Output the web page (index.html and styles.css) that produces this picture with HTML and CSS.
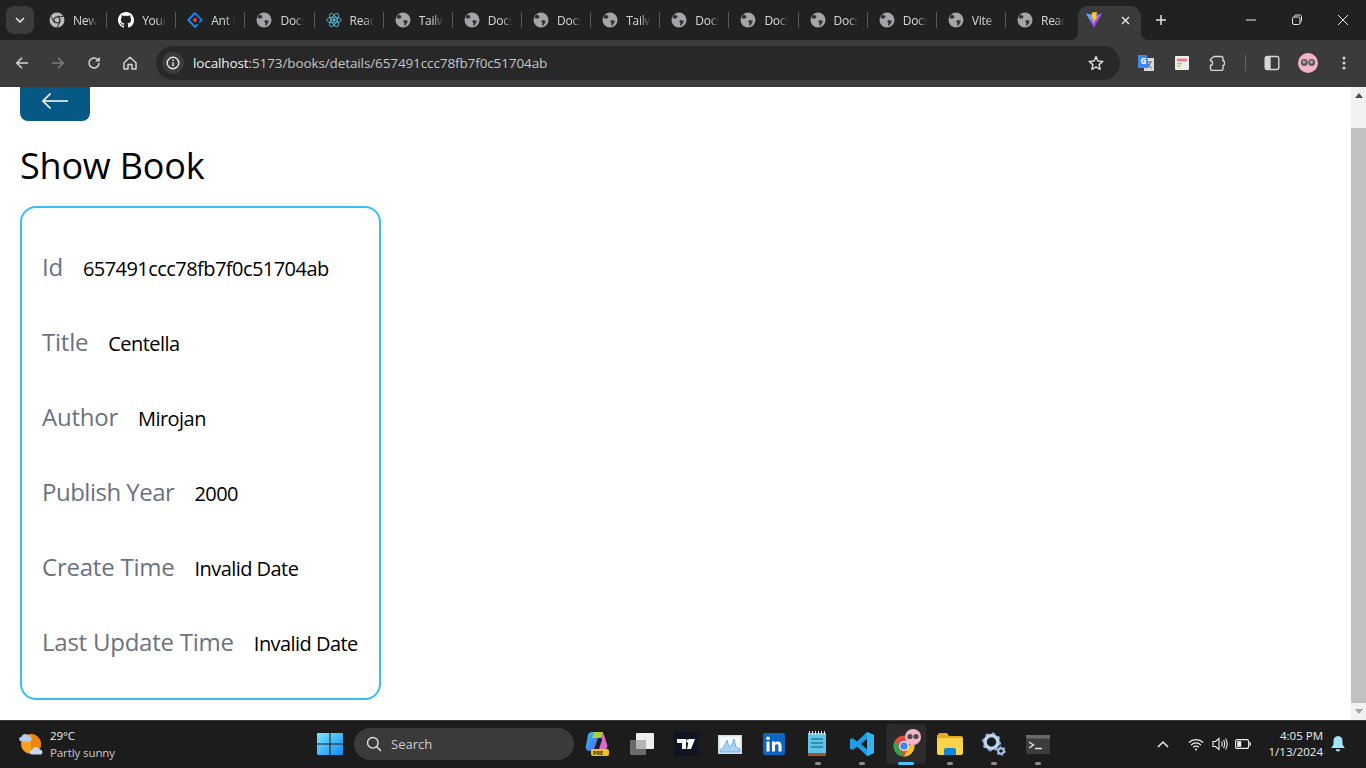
FILE: index.html
```html
<!DOCTYPE html>
<html lang="en">
<head>
<meta charset="utf-8">
<title>Show Book</title>
<link rel="stylesheet" href="styles.css">
</head>
<body>
<svg class="defs" width="0" height="0">
  <symbol id="globe" viewBox="0 0 16 16">
    <circle cx="8" cy="8" r="7.500" fill="#a3a5a8"/>
    <path d="M3.600 2.600 6.400 4 6 6 3.800 6.800 1.400 5.800C1.800 4.500 2.600 3.400 3.600 2.600ZM9.400 8 12.800 8.800 12.200 10.800 10.200 13.800 9.200 13.400 9.400 11 8.200 9.400Z" fill="#2f3133"/>
  </symbol>
</svg>
<div class="screen">
  <header class="tabstrip">
    <button class="tabsearch"><svg width="10" height="6" viewBox="0 0 10 6"><path d="M1 1l4 4 4-4" fill="none" stroke="#e3e3e3" stroke-width="1.600"/></svg></button>
    <div class="tabs">
      <div class="tab"><svg class="fav" viewBox="0 0 16 16"><circle cx="8" cy="8" r="7.500" fill="#b9bbbd"/><circle cx="8" cy="8" r="3.600" fill="#2a2c2e"/><circle cx="8" cy="8" r="2.400" fill="#b9bbbd"/><path d="M8 4.400h6.400M5 10 1.800 4.400M11 10l-3 5.400" stroke="#2a2c2e" stroke-width="1"/></svg><span class="tab-label">New Tab</span></div>
      <div class="tab"><svg class="fav" viewBox="0 0 16 16"><path fill="#fff" d="M8 0C3.580 0 0 3.580 0 8c0 3.540 2.290 6.530 5.470 7.590.4.070.55-.17.55-.38 0-.19-.01-.82-.01-1.490-2.010.37-2.530-.49-2.690-.94-.09-.23-.48-.94-.82-1.130-.28-.15-.68-.52-.01-.53.63-.01 1.080.58 1.230.82.72 1.210 1.870.87 2.330.66.070-.52.28-.87.51-1.070-1.780-.2-3.640-.89-3.640-3.950 0-.87.31-1.590.82-2.150-.08-.2-.36-1.020.08-2.120 0 0 .67-.21 2.200.82.64-.18 1.320-.27 2-.27s1.360.09 2 .27c1.530-1.040 2.200-.82 2.200-.82.44 1.100.16 1.920.08 2.120.51.56.82 1.270.82 2.150 0 3.070-1.870 3.750-3.650 3.950.29.25.54.73.54 1.480 0 1.070-.01 1.930-.01 2.200 0 .21.15.46.55.38A8.010 8.010 0 0 0 16 8c0-4.420-3.580-8-8-8Z"/></svg><span class="tab-label">Your Repo</span></div>
      <div class="tab"><svg class="fav fav-ant" viewBox="0 0 16 16" fill="none" stroke-width="1.900"><path d="M8 1 1.300 8 8 15 10.600 12.300" stroke="#1a8cf5"/><path d="M8 1 14.700 8 12.200 10.600M8 1 5.400 3.700" stroke="#1578dc"/><circle cx="8" cy="8" r="2" fill="#ef3a4e" stroke="none"/></svg><span class="tab-label">Ant Design</span></div>
      <div class="tab"><svg class="fav" viewBox="0 0 16 16"><use href="#globe"/></svg><span class="tab-label">Docs</span></div>
      <div class="tab"><svg class="fav" viewBox="0 0 16 16" fill="none" stroke="#5ab4cf" stroke-width=".9"><ellipse cx="8" cy="8" rx="7.300" ry="2.900"/><ellipse cx="8" cy="8" rx="7.300" ry="2.900" transform="rotate(60 8 8)"/><ellipse cx="8" cy="8" rx="7.300" ry="2.900" transform="rotate(120 8 8)"/><circle cx="8" cy="8" r="1.300" fill="#5ab4cf"/></svg><span class="tab-label">React</span></div>
      <div class="tab"><svg class="fav" viewBox="0 0 16 16"><use href="#globe"/></svg><span class="tab-label">Tailwind</span></div>
      <div class="tab"><svg class="fav" viewBox="0 0 16 16"><use href="#globe"/></svg><span class="tab-label">Docs</span></div>
      <div class="tab"><svg class="fav" viewBox="0 0 16 16"><use href="#globe"/></svg><span class="tab-label">Docs</span></div>
      <div class="tab"><svg class="fav" viewBox="0 0 16 16"><use href="#globe"/></svg><span class="tab-label">Tailwind</span></div>
      <div class="tab"><svg class="fav" viewBox="0 0 16 16"><use href="#globe"/></svg><span class="tab-label">Docs</span></div>
      <div class="tab"><svg class="fav" viewBox="0 0 16 16"><use href="#globe"/></svg><span class="tab-label">Docs</span></div>
      <div class="tab"><svg class="fav" viewBox="0 0 16 16"><use href="#globe"/></svg><span class="tab-label">Docs</span></div>
      <div class="tab"><svg class="fav" viewBox="0 0 16 16"><use href="#globe"/></svg><span class="tab-label">Docs</span></div>
      <div class="tab"><svg class="fav" viewBox="0 0 16 16"><use href="#globe"/></svg><span class="tab-label">Vite</span></div>
      <div class="tab tab-last"><svg class="fav" viewBox="0 0 16 16"><use href="#globe"/></svg><span class="tab-label">React</span></div>
      <div class="tab-active">
        <svg class="fav" viewBox="0 0 16 16"><defs><linearGradient id="vite" x1="0" y1="0" x2="1" y2="1"><stop offset="0" stop-color="#41d1ff"/><stop offset=".6" stop-color="#a04bf5"/><stop offset="1" stop-color="#8a3ff0"/></linearGradient></defs><path d="M0 1.500 8 3 16 1.500 8 15.500Z" fill="url(#vite)"/><path d="M6 .6 11.200 0 9.800 4.600 11.800 4.200 6.800 11.800 7.600 6.400 5.400 6.700Z" fill="#fdc530"/></svg>
        <svg class="tab-close" width="9" height="9" viewBox="0 0 9 9"><path d="M1 1l7 7M8 1 1 8" stroke="#e8e8e8" stroke-width="1.400"/></svg>
      </div>
      <svg class="newtab" width="12" height="12" viewBox="0 0 12 12"><path d="M6 1v10M1 6h10" stroke="#e3e3e3" stroke-width="1.500"/></svg>
    </div>
    <div class="winctl">
      <svg width="46" height="12" viewBox="0 0 46 12"><path d="M18 6h10" stroke="#e8e8e8"/></svg>
      <svg width="46" height="12" viewBox="0 0 46 12"><rect x="18.500" y="3" width="7.500" height="7.500" rx="1.500" fill="none" stroke="#e8e8e8"/><path d="M20.500 2.500c0-1 .6-1.500 1.500-1.500h3.500c1.200 0 2 .8 2 2v3.500c0 1-.5 1.500-1.500 1.500" fill="none" stroke="#e8e8e8"/></svg>
      <svg width="46" height="12" viewBox="0 0 46 12"><path d="M18 1l10 10M28 1 18 11" stroke="#e8e8e8"/></svg>
    </div>
  </header>

  <nav class="toolbar">
    <div class="navbtns">
      <svg width="14" height="14" viewBox="0 0 14 14"><path d="M13 7H2M7 1.800 1.800 7 7 12.200" fill="none" stroke="#d6d6d6" stroke-width="1.500"/></svg>
      <svg width="14" height="14" viewBox="0 0 14 14"><path d="M1 7h11M7 1.800 12.200 7 7 12.200" fill="none" stroke="#7e7e7e" stroke-width="1.500"/></svg>
      <svg width="14" height="14" viewBox="0 0 14 14"><path d="M12 7A5 5 0 1 1 10.500 3.400" fill="none" stroke="#d6d6d6" stroke-width="1.500"/><path d="M12.800 1v4.600H8.200Z" fill="#d6d6d6"/></svg>
      <svg width="14" height="14" viewBox="0 0 14 14"><path d="M1 6.800 7 1.200 13 6.800V13H9V8.500H5V13H1Z" fill="none" stroke="#d6d6d6" stroke-width="1.500" stroke-linejoin="round"/></svg>
    </div>
    <div class="omnibox">
      <span class="site-info"><svg width="14" height="14" viewBox="0 0 14 14"><circle cx="7" cy="7" r="5.800" fill="none" stroke="#e8e8e8" stroke-width="1.400"/><path d="M7 6.200v4M7 3.600v1.400" stroke="#e8e8e8" stroke-width="1.400"/></svg></span>
      <span class="url"><span class="url-host">localhost</span>:5173/books/details/657491ccc78fb7f0c51704ab</span>
      <svg class="star" width="16" height="16" viewBox="0 0 16 16"><path d="M8 1.500 9.900 6 14.800 6.400 11.100 9.600 12.200 14.400 8 11.900 3.800 14.400 4.900 9.600 1.200 6.400 6.100 6Z" fill="none" stroke="#dcdcdc" stroke-width="1.400" stroke-linejoin="round"/></svg>
    </div>
    <div class="extensions">
      <svg width="18" height="18" viewBox="0 0 18 18"><rect x="7" y="4" width="10" height="13" fill="#d8d8d8"/><path d="M11 8h4M13 8c0 3-1.500 5-3 6M11 10c1 2 2 3 4 4" stroke="#666" fill="none"/><path d="M1 1h9l2 13H1Z" fill="#4285f4"/><text class="ext-g" x="3.500" y="10">G</text></svg>
      <svg width="14" height="14" viewBox="0 0 14 14"><rect width="14" height="14" rx="1" fill="#eeeeee"/><rect x="2" y="2.500" width="10" height="3" fill="#f08080"/><rect x="2" y="7" width="5" height="1.300" fill="#9ad43a"/><rect x="2" y="9.500" width="3.500" height="1.300" fill="#9ad43a"/></svg>
      <svg width="16" height="16" viewBox="0 0 16 16"><path d="M5 1.500h7.500A1.800 1.800 0 0 1 14 3.300V6h.6a1.400 1.400 0 0 1 1 1.400v1.400a1.400 1.400 0 0 1-1 1.400H14v3.600a1.800 1.800 0 0 1-1.500 1.700H3a1.800 1.800 0 0 1-1.500-1.700v-3.600h1a1.400 1.400 0 0 0 1-1.400V7.400A1.400 1.400 0 0 0 2.500 6h-1V4.200Z" fill="none" stroke="#d6d6d6" stroke-width="1.400" stroke-linejoin="round"/></svg>
      <span class="tb-sep"></span>
      <svg class="ext-panel" width="16" height="16" viewBox="0 0 16 16"><rect x="1.200" y="1.500" width="13.600" height="13" rx="2" fill="none" stroke="#d6d6d6" stroke-width="1.400"/><rect x="1.200" y="1.500" width="5.500" height="13" rx="1.500" fill="#d6d6d6"/></svg>
      <svg class="ext-avatar" width="20" height="20" viewBox="0 0 20 20"><circle cx="10" cy="10" r="10" fill="#f4b3c7"/><circle cx="6.300" cy="9.500" r="3.400" fill="#55585a"/><circle cx="13.700" cy="9.500" r="3.400" fill="#55585a"/><circle cx="6" cy="9" r="1.700" fill="#a5a8aa"/><circle cx="13.400" cy="9" r="1.700" fill="#a5a8aa"/></svg>
      <svg width="4" height="14" viewBox="0 0 4 14"><circle cx="2" cy="2" r="1.500" fill="#d6d6d6"/><circle cx="2" cy="7" r="1.500" fill="#d6d6d6"/><circle cx="2" cy="12" r="1.500" fill="#d6d6d6"/></svg>
    </div>
  </nav>

  <div class="viewport">
    <main class="page">
      <a class="back"><svg width="28" height="18" viewBox="0 0 28 18"><path d="M27 9H2M9.500 1.500 2 9l7.500 7.500" fill="none" stroke="#fff" stroke-width="1.700"/></svg></a>
      <h1 class="title">Show Book</h1>
      <section class="card">
        <div class="row"><span class="label">Id</span><span class="value">657491ccc78fb7f0c51704ab</span></div>
        <div class="row"><span class="label">Title</span><span class="value">Centella</span></div>
        <div class="row"><span class="label">Author</span><span class="value">Mirojan</span></div>
        <div class="row"><span class="label label-tight">Publish Year</span><span class="value">2000</span></div>
        <div class="row"><span class="label">Create Time</span><span class="value">Invalid Date</span></div>
        <div class="row"><span class="label">Last Update Time</span><span class="value">Invalid Date</span></div>
      </section>
    </main>
    <div class="scrollbar">
      <div class="sb-btn"><span class="sb-up"></span></div>
      <div class="sb-track"><div class="sb-thumb"></div></div>
      <div class="sb-btn"><span class="sb-down"></span></div>
    </div>
  </div>

  <footer class="taskbar">
    <div class="weather">
      <svg width="26" height="24" viewBox="0 0 26 24"><circle cx="13" cy="12" r="10" fill="#f7a01e"/><path d="M13 2a10 10 0 0 1 0 20Z" fill="#ee8510"/><path d="M3.500 9.500C.500 9.500.500 5 3.600 4.800 4.300 1 10 1 10.800 4.400c3.700-.2 4 5.100.7 5.100Z" fill="#b4cdf0"/><path d="M14 22.500c-3 0-3-4.500.2-4.700.7-3.800 6.400-3.800 7.200-.4 3.700-.2 4.200 5.100.8 5.100Z" fill="#c6daf5"/></svg>
      <div class="weather-text"><span>29°C</span><span class="weather-sub">Partly sunny</span></div>
    </div>
    <svg class="start" width="26" height="24" viewBox="0 0 26 24"><defs><linearGradient id="win" x1="0" y1="0" x2="1" y2="1"><stop offset="0" stop-color="#7ce6ff"/><stop offset="1" stop-color="#0f8cf0"/></linearGradient></defs><path d="M1 1h11.500v10.500H0V2a1 1 0 0 1 1-1ZM13.500 1H25a1 1 0 0 1 1 1v9.500H13.500ZM0 12.500h12.500V23H1a1 1 0 0 1-1-1ZM13.500 12.500H26V22a1 1 0 0 1-1 1H13.500Z" fill="url(#win)"/></svg>
    <div class="search">
      <svg width="16" height="16" viewBox="0 0 16 16"><circle cx="6.800" cy="6.800" r="5.300" fill="none" stroke="#e0e0e0" stroke-width="1.400"/><path d="m10.700 10.700 4.300 4.300" stroke="#e0e0e0" stroke-width="1.500"/></svg>
      <span>Search</span>
    </div>
    <div class="apps">
      <div class="app"><svg width="26" height="26" viewBox="0 0 26 26"><defs><linearGradient id="cp" x1="0" y1="0" x2="1" y2="1"><stop offset="0" stop-color="#2fc6e6"/><stop offset=".6" stop-color="#4a82ea"/><stop offset="1" stop-color="#7a5cf0"/></linearGradient></defs><path d="M3 4c1-3 3-3 5-3h7l-5 15c-1 3-3 4-5 4-3 0-5-2-4-6Z" fill="url(#cp)"/><path d="M15 1c2 0 3 1 4 3l3 9c1 3 0 5-3 5h-5l3-9Z" fill="#d86cc8"/><path d="M9 1h9l-2 6H7Z" fill="#a6d23e"/><rect x="6" y="18" width="18" height="7" rx="2" fill="#f2c21b"/><text class="pre" x="8" y="24">PRE</text></svg></div>
      <div class="app"><svg width="24" height="22" viewBox="0 0 24 22"><rect y="7" width="16" height="15" rx="1" fill="#6a6a6a"/><rect x="6" width="18" height="16" rx="1" fill="#eeeeee"/><rect x="6" y="7" width="10" height="9" fill="#b5b5b5"/></svg></div>
      <div class="app"><svg width="24" height="24" viewBox="0 0 24 24"><rect width="24" height="24" fill="#0f1422"/><path d="M3 7h9v10H8V11H3ZM15 7h6l-4 10h-4Z" fill="#fff"/><circle cx="14" cy="9" r="1.700" fill="#fff"/></svg></div>
      <div class="app"><svg width="24" height="19" viewBox="0 0 24 19"><rect width="24" height="19" fill="#d5dce6"/><rect x="1.500" y="1.500" width="21" height="16" fill="#f6f8fb"/><path d="M2 15 6 12 9 5 11 12 14 10 16 4 18 12 22 14V17H2Z" fill="#a9d3f2" stroke="#4a9ee0" stroke-width=".7"/></svg></div>
      <div class="app"><svg width="22" height="22" viewBox="0 0 22 22"><rect width="22" height="22" rx="2" fill="#0a66c2"/><rect x="3.500" y="8.500" width="3" height="10" fill="#fff"/><circle cx="5" cy="5.200" r="1.800" fill="#fff"/><path d="M9 8.500h3v1.500c1-2 6.500-2.500 6.500 2.500v6h-3v-5.500c0-2.500-3.500-2.200-3.500 0v5.500H9Z" fill="#fff"/></svg></div>
      <div class="app"><svg width="20" height="26" viewBox="0 0 20 26"><rect y="2" width="18" height="22" fill="#5fc4e6"/><rect y="22" width="18" height="3" fill="#a0561e"/><path d="M1.500 0v4M4.500 0v4M7.500 0v4M10.500 0v4M13.500 0v4M16.500 0v4" stroke="#d8eff7"/><path d="M3 8h12M3 12h12M3 16h12" stroke="#1f7da3" stroke-width="1.700"/></svg></div>
      <div class="app"><svg width="24" height="24" viewBox="0 0 24 24"><path d="M17 0 24 3V21L17 24 7 14.500 2.500 18 0 16.500V7.500L2.500 6 7 9.500ZM17 6.800 11 12 17 17.200Z" fill="#1a9ee8"/><path d="M17 0 24 3V21L17 24Z" fill="#35b2f2"/></svg></div>
      <div class="app app-on"><svg width="30" height="30" viewBox="0 0 30 30"><circle cx="13" cy="17" r="10.500" fill="#e24a3a"/><path d="M2.500 17c0-2 .5-3.800 1.400-5.300L13 27.500C7.200 27.500 2.500 22.800 2.500 17Z" fill="#2ea44f"/><path d="M22.500 12.500A10.500 10.500 0 0 1 13 27.500L18 17.500Z" fill="#f8c42b"/><circle cx="13" cy="17" r="5" fill="#fff"/><circle cx="13" cy="17" r="3.800" fill="#4385f5"/><circle cx="22" cy="8" r="8" fill="#f4b3c7"/><circle cx="19" cy="7.500" r="2.600" fill="#4a4a4a"/><circle cx="25" cy="7.500" r="2.600" fill="#4a4a4a"/></svg></div>
      <div class="app"><svg width="26" height="22" viewBox="0 0 26 22"><path d="M1 2a2 2 0 0 1 2-2h7l2 3h12a2 2 0 0 1 2 2v3H0V2Z" fill="#e8a71f"/><path d="M0 5h26v15a2 2 0 0 1-2 2H2a2 2 0 0 1-2-2Z" fill="#fbd34d"/><path d="M7 22v-5a2 2 0 0 1 2-2h8a2 2 0 0 1 2 2v5Z" fill="#1584d6"/></svg></div>
      <div class="app"><svg width="24" height="24" viewBox="0 0 24 24"><circle cx="9.500" cy="10" r="6.500" fill="none" stroke="#c0d6ee" stroke-width="3.500"/><circle cx="9.500" cy="10" r="8.500" fill="none" stroke="#8fb3d8" stroke-width="2" stroke-dasharray="3 3.700"/><circle cx="19" cy="19" r="2.800" fill="none" stroke="#aecbe8" stroke-width="2"/><circle cx="19" cy="19" r="4.200" fill="none" stroke="#88a8c8" stroke-width="1.400" stroke-dasharray="2 2.400"/></svg></div>
      <div class="app"><svg width="24" height="19" viewBox="0 0 24 19"><rect width="24" height="19" rx="1" fill="#3c3c3c"/><rect width="24" height="3.500" fill="#6a6a6a"/><path d="m3 7 4.500 3L3 13" fill="none" stroke="#e6e6e6" stroke-width="1.400"/><path d="M9 13.500h7" stroke="#e6e6e6" stroke-width="1.400"/></svg></div>
    </div>
    <div class="tray">
      <svg width="12" height="8" viewBox="0 0 12 8"><path d="M1 7 6 2l5 5" fill="none" stroke="#eee" stroke-width="1.500"/></svg>
      <svg class="tray-wifi" width="16" height="13" viewBox="0 0 16 13" fill="none" stroke="#eee" stroke-width="1.200"><path d="M.8 4.500C5 .6 11 .6 15.200 4.500M3 7c3-2.600 7-2.600 10 0M5.200 9.300c1.600-1.300 4-1.300 5.600 0"/><circle cx="8" cy="11.500" r="1" fill="#eee" stroke="none"/></svg>
      <svg class="tray-vol" width="16" height="14" viewBox="0 0 16 14" fill="none" stroke="#eee" stroke-width="1.100"><path d="M1 4.500h2.500L7 1.500v11L3.500 9.500H1ZM9.500 4.500c1 1.500 1 3.500 0 5M11.500 3c1.600 2.500 1.600 5.500 0 8M13.500 1.500c2.200 3.500 2.200 7.500 0 11"/></svg>
      <svg class="tray-bat" width="16" height="10" viewBox="0 0 16 10"><rect x=".6" y=".6" width="13" height="8.800" rx="2" fill="none" stroke="#eee" stroke-width="1.100"/><rect x="2.200" y="2.200" width="4" height="5.600" fill="#eee"/><rect x="14.500" y="3.200" width="1.300" height="3.600" fill="#eee"/></svg>
      <div class="clock"><span>4:05 PM</span><span>1/13/2024</span></div>
      <svg class="bell" width="14" height="16" viewBox="0 0 14 16"><path d="M7 0c3 0 4.500 2.200 4.500 5v3.500L13.800 12H.2l2.300-3.500V5C2.500 2.200 4 0 7 0Z" fill="#9fe3fb"/><path d="M4.800 13.200h4.400a2.200 2.200 0 0 1-4.400 0Z" fill="#9fe3fb"/></svg>
    </div>
  </footer>
</div>
</body>
</html>
```
FILE: styles.css
```css
* { box-sizing: border-box; }
html, body { margin: 0; height: 100%; overflow: hidden; }
body { font-family: "Open Sans", "Noto Sans", sans-serif; background: #fff; }
.defs { position: absolute; }
.screen { width: 1366px; height: 768px; display: flex; flex-direction: column; }

.tabstrip { height: 40px; flex: none; background: #202222; display: flex; align-items: center; }
.tabsearch { width: 28px; height: 28px; margin: 0 0 0 6px; padding: 0; border: 0; border-radius: 8px; background: #3b3d3d; display: flex; align-items: center; justify-content: center; flex: none; }
.tabs { display: flex; align-items: center; height: 40px; margin-left: 4px; flex: 1; }
.tab { width: 69.15px; height: 16px; flex: none; display: flex; align-items: center; padding-left: 11px; gap: 8px; border-right: 1px solid #55585a; overflow: hidden; }
.tab-last { border-right: 0; width: 72px; }
.fav { width: 16px; height: 16px; flex: none; }
.tab-label { font-size: 12px; color: #d8d8d8; letter-spacing: -.25px; white-space: nowrap; width: 24px; overflow: hidden; -webkit-mask-image: linear-gradient(90deg, #000 60%, transparent); mask-image: linear-gradient(90deg, #000 60%, transparent); }
.tab-active { width: 63px; height: 34px; margin-top: 6px; background: #3b3b3b; border-radius: 10px 10px 0 0; display: flex; align-items: flex-start; padding: 6px 11px 0 8px; justify-content: space-between; flex: none; position: relative; }
.tab-active::before, .tab-active::after { content: ""; position: absolute; bottom: 0; width: 8px; height: 8px; }
.tab-active::before { left: -8px; background: radial-gradient(circle at 0 0, transparent 8px, #3b3b3b 8.5px); }
.tab-active::after { right: -8px; background: radial-gradient(circle at 100% 0, transparent 8px, #3b3b3b 8.5px); }
.tab-close { margin-top: 4px; flex: none; }
.newtab { margin-left: 14px; flex: none; }
.winctl { display: flex; flex: none; }
.winctl svg { display: block; }

.toolbar { height: 47px; flex: none; background: #3b3b3b; display: flex; align-items: center; padding: 0 0 1px 15px; }
.navbtns { display: flex; align-items: center; gap: 22px; width: 141px; flex: none; }
.omnibox { width: 964px; height: 34px; flex: none; border-radius: 17px; background: #282828; display: flex; align-items: center; padding: 0 16px 0 6px; }
.site-info { width: 22px; height: 22px; border-radius: 50%; background: #3b3b3b; display: flex; align-items: center; justify-content: center; flex: none; }
.url { font-size: 13.5px; color: #c4c7c5; margin-left: 9px; letter-spacing: -.11px; flex: 1; white-space: nowrap; }
.url-host { color: #f0f0f0; }
.star { flex: none; }
.extensions { display: flex; align-items: center; flex: none; margin-left: 17px; width: 225px; }
.extensions svg { flex: none; margin-right: 20px; }
.extensions .ext-panel { margin-right: 18px; }
.extensions .ext-avatar { margin-right: 24px; }
.tb-sep { width: 1px; height: 16px; background: #666; margin-right: 18px; flex: none; }
.ext-g { font-size: 8px; font-weight: 700; fill: #fff; }

.viewport { flex: 1; min-height: 0; display: flex; background: #fff; overflow: hidden; }
.page { flex: 1; padding: 0 20px; overflow: hidden; }
.back { display: flex; align-items: center; justify-content: center; width: 70px; height: 42px; margin-top: -8px; padding-top: 2px; background: #075985; border-radius: 8px; }
.title { margin: 21px 0 16px; font-size: 36px; line-height: 48px; font-weight: 400; color: #000; letter-spacing: -.2px; }
.card { width: 361px; height: 494px; border: 2px solid #38bdf8; border-radius: 16px; padding: 21px 20px 19px; }
.row { height: 75px; display: flex; align-items: center; gap: 20px; white-space: nowrap; }
.label { font-size: 24px; color: #6b7280; letter-spacing: -.23px; line-height: 32px; }
.label-tight { letter-spacing: -.5px; }
.value { font-size: 20px; color: #000; letter-spacing: -.55px; line-height: 28px; position: relative; top: 2px; }

.scrollbar { width: 15px; flex: none; background: #f1f1f1; display: flex; flex-direction: column; }
.sb-btn { height: 17px; flex: none; display: flex; align-items: center; justify-content: center; }
.sb-up { border: 4px solid transparent; border-top: 0; border-bottom: 5px solid #505050; }
.sb-down { border: 4px solid transparent; border-bottom: 0; border-top: 5px solid #a3a3a3; }
.sb-track { flex: 1; padding-top: 24px; display: flex; }
.sb-thumb { flex: 1; background: #c1c1c1; }

.taskbar { height: 48px; flex: none; background: #1c1c1c; border-top: 1px solid #3a3a3a; padding-bottom: 1px; display: flex; align-items: center; color: #eee; }
.weather { width: 316px; flex: none; display: flex; align-items: center; padding-left: 18px; gap: 6px; }
.weather-text { display: flex; flex-direction: column; font-size: 11.500px; line-height: 17px; letter-spacing: -.1px; }
.weather-sub { color: #c9c9c9; }
.start { flex: none; margin-left: 1px; }
.search { width: 220px; height: 32px; margin-left: 11px; flex: none; border-radius: 16px; background: #3a3a3a; display: flex; align-items: center; padding-left: 12px; gap: 9px; font-size: 13px; color: #cfcfcf; }
.apps { display: flex; gap: 4px; margin-left: 4px; flex: none; }
.app { width: 40px; height: 40px; position: relative; display: flex; align-items: center; justify-content: center; border-radius: 4px; }
.app:nth-child(n+6)::after { content: ""; position: absolute; bottom: -1px; left: 17px; width: 6px; height: 3px; border-radius: 2px; background: #8e8e8e; }
.app-on { background: #2b2b2b; }
.app.app-on::after { left: 12px; width: 16px; background: #4cc2ff; }
.pre { font-size: 5.500px; font-weight: 700; fill: #1c1c1c; }
.tray { flex: 1; display: flex; align-items: center; padding-left: 99px; }
.tray-wifi { margin-left: 19px; }
.tray-vol { margin-left: 8px; }
.tray-bat { margin-left: 7px; }
.clock { width: 72px; display: flex; flex-direction: column; align-items: flex-end; font-size: 11.500px; line-height: 16px; color: #eee; }
.bell { margin-left: 8px; flex: none; }
```
